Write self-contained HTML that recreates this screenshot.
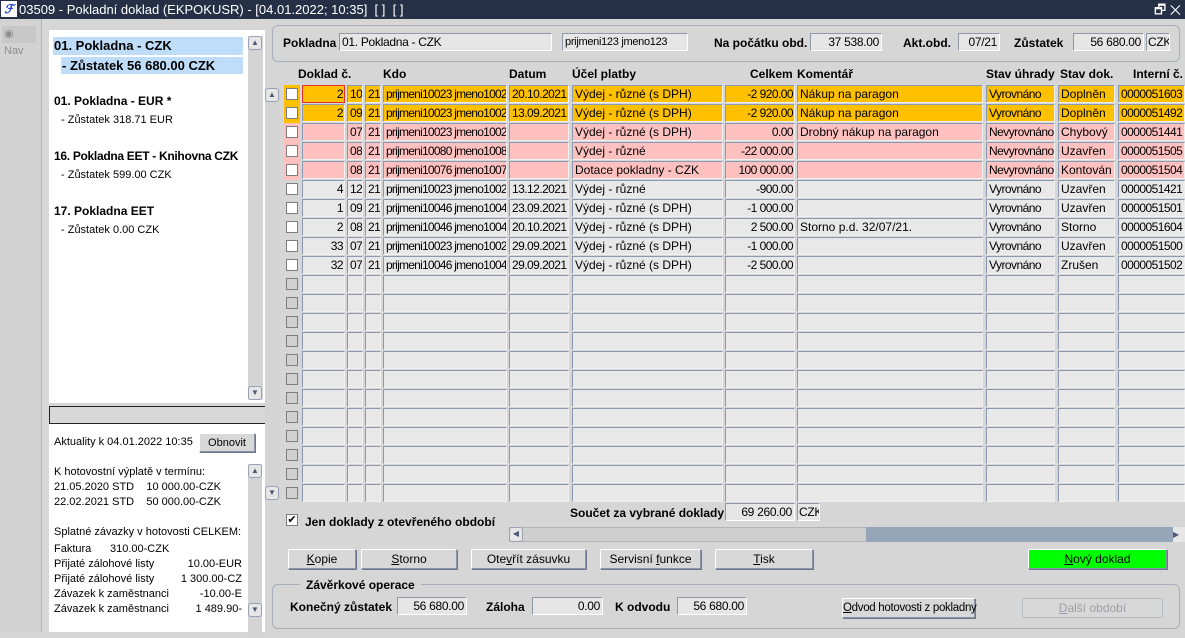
<!DOCTYPE html>
<html><head><meta charset="utf-8">
<style>
*{box-sizing:border-box;margin:0;padding:0}
body{width:1185px;height:632px;overflow:hidden;background:#d6d6d6;font-family:"Liberation Sans",sans-serif;font-size:12px;color:#000;position:relative}
.a{position:absolute}
.title{left:0;top:0;width:1185px;height:19px;background:#253047;color:#fff;font-size:13px;line-height:19px;padding-left:19px}
.logo{left:1px;top:1px;width:16px;height:16px;background:#fff;color:#1a3cc8;font:bold italic 12px "Liberation Sans";line-height:16px;text-align:center}
.fld{position:absolute;height:18px;border:1px solid #8f98a6;border-right-color:#fff;border-bottom-color:#fff;background:#e6e6e6;line-height:16px;padding:0 2px;white-space:nowrap;overflow:hidden;font-size:12px;letter-spacing:-0.3px}
.r{text-align:right}
.b{font-weight:bold}
.cell{position:absolute;height:18px;border:1px solid #8a98b0;border-right-color:#f0f0f0;border-bottom-color:#f0f0f0;line-height:16px;padding:0 1px 0 2px;white-space:nowrap;overflow:hidden}
.n{letter-spacing:-0.55px}
.k{letter-spacing:-0.75px}
.cb{position:absolute;width:12px;height:12px;border:1px solid #7d7d7d;background:#fff}
.btn{position:absolute;height:20px;border:1px solid #8a94a4;border-top-color:#fff;border-left-color:#fff;background:#d8d8d8;text-align:center;line-height:18px;box-shadow:1px 1px 0 #6c7890;white-space:nowrap}
.grp{position:absolute;border:1px solid #a7afbc;border-radius:6px}
.sb{position:absolute;background:#d0d0d0}
.arr{position:absolute;width:14px;height:14px;border:1px solid #98a2b4;border-radius:3px;background:#e6e6e6;font-size:8px;line-height:12px;text-align:center;color:#4c5a74}
</style></head><body>
<div class="a title">03509 - Pokladní doklad (EKPOKUSR) - [04.01.2022; 10:35]&nbsp; [ ]&nbsp; [ ]</div>
<div class="a logo">ℱ</div>
<div class="a" style="right:4px;top:1px;color:#fff;font-size:13px;line-height:17px">🗗 ✕</div>

<div class="a" style="left:0;top:19px;width:42px;height:613px;background:#d3d3d3;border-right:1px solid #b4b4b4"></div>
<div class="a" style="left:2px;top:26px;width:34px;height:17px;background:#c8c8c8;color:#8c8c8c;font-size:11px;line-height:17px;padding-left:2px">◉ Nav</div>
<div class="a" style="left:43px;top:19px;width:6px;height:613px;background:#d8d8d8"></div>

<div class="a" style="left:49px;top:30px;width:216px;height:373px;background:#fff"></div>
<div class="a" style="left:53px;top:37px;width:190px;height:18px;background:#bfdcf8;font-size:13px;font-weight:bold;line-height:18px;padding-left:1px">01. Pokladna - CZK</div>
<div class="a" style="left:61px;top:57px;width:182px;height:17px;background:#bfdcf8;font-size:13px;font-weight:bold;line-height:17px;padding-left:1px">- Zůstatek 56 680.00 CZK</div>
<div class="a b" style="left:54px;top:94px;font-size:12px">01. Pokladna - EUR *</div>
<div class="a" style="left:61px;top:114px;font-size:11px">- Zůstatek 318.71 EUR</div>
<div class="a b" style="left:54px;top:149px;font-size:12px;letter-spacing:-0.3px">16. Pokladna EET - Knihovna CZK</div>
<div class="a" style="left:61px;top:169px;font-size:11px">- Zůstatek 599.00 CZK</div>
<div class="a b" style="left:54px;top:204px;font-size:12px">17. Pokladna EET</div>
<div class="a" style="left:61px;top:224px;font-size:11px">- Zůstatek 0.00 CZK</div>
<div class="sb" style="left:248px;top:36px;width:15px;height:364px;background:#d4d4d4"></div>
<div class="arr" style="left:248px;top:36px">▲</div>
<div class="arr" style="left:248px;top:386px">▼</div>
<div class="a" style="left:49px;top:406px;width:216px;height:18px;background:#d8d8d8;border:1px solid #222;border-right:none"></div>
<div class="a" style="left:49px;top:424px;width:216px;height:208px;background:#fff"></div>
<div class="a" style="left:54px;top:436px;font-size:11px">Aktuality k 04.01.2022 10:35</div>
<div class="btn" style="left:199px;top:433px;width:56px;height:19px;font-size:11px">Obnovit</div>
<div class="a" style="left:54px;top:465px;font-size:11px;line-height:15px;white-space:pre">K hotovostní výplatě v termínu:
21.05.2020 STD    10 000.00-CZK
22.02.2021 STD    50 000.00-CZK

Splatné závazky v hotovosti CELKEM:</div>
<div class="a" style="left:54px;top:542px;font-size:11px;line-height:15px">Faktura<br>Přijaté zálohové listy<br>Přijaté zálohové listy<br>Závazek k zaměstnanci<br>Závazek k zaměstnanci</div>
<div class="a" style="left:54px;top:542px;width:188px;font-size:11px;line-height:15px;text-align:right;overflow:hidden;white-space:nowrap"><span style="position:absolute;left:56px">310.00-CZK</span><br>10.00-EUR<br>1 300.00-CZ<br>-10.00-E<br>1 489.90-</div>
<div class="sb" style="left:248px;top:464px;width:14px;height:174px;background:#d4d4d4"></div>
<div class="arr" style="left:248px;top:464px">▲</div>
<div class="arr" style="left:248px;top:603px">▼</div>

<div class="grp" style="left:272px;top:25px;width:908px;height:37px"></div>
<div class="a b" style="left:283px;top:36px">Pokladna</div>
<div class="fld" style="left:339px;top:33px;width:213px">01. Pokladna - CZK</div>
<div class="fld" style="left:562px;top:33px;width:126px;font-size:11px">prijmeni123 jmeno123</div>
<div class="a b" style="left:714px;top:36px">Na počátku obd.</div>
<div class="fld r" style="left:810px;top:33px;width:72px">37 538.00</div>
<div class="a b" style="left:903px;top:36px">Akt.obd.</div>
<div class="fld r" style="left:958px;top:33px;width:42px">07/21</div>
<div class="a b" style="left:1014px;top:36px">Zůstatek</div>
<div class="fld r" style="left:1073px;top:33px;width:71px">56 680.00</div>
<div class="fld" style="left:1146px;top:33px;width:24px;padding:0 1px">CZK</div>

<div class="a b" style="left:298px;top:67px">Doklad č.</div>
<div class="a b" style="left:383px;top:67px">Kdo</div>
<div class="a b" style="left:509px;top:67px">Datum</div>
<div class="a b" style="left:572px;top:67px">Účel platby</div>
<div class="a b" style="left:750px;top:67px">Celkem</div>
<div class="a b" style="left:797px;top:67px">Komentář</div>
<div class="a b" style="left:986px;top:67px">Stav úhrady</div>
<div class="a b" style="left:1060px;top:67px">Stav dok.</div>
<div class="a b" style="left:1133px;top:67px">Interní č.</div>

<div class="sb" style="left:265px;top:88px;width:15px;height:412px;background:#d4d4d4"></div>
<div class="arr" style="left:265px;top:88px">▲</div>
<div class="arr" style="left:265px;top:486px">▼</div>

<div id="rows"></div>

<div class="cb" style="left:286px;top:514px;background:#fff;font-size:11px;line-height:10px;text-align:center">✔</div>
<div class="a b" style="left:305px;top:515px">Jen doklady z otevřeného období</div>
<div class="a b" style="left:570px;top:506px">Součet za vybrané doklady</div>
<div class="fld r" style="left:725px;top:503px;width:70px">69 260.00</div>
<div class="fld" style="left:797px;top:503px;width:23px;padding:0 1px">CZK</div>
<div class="a" style="left:509px;top:527px;width:676px;height:15px;background:#cfcfcf;border:1px solid #b4b4b4"></div>
<div class="a" style="left:866px;top:527px;width:319px;height:15px;background:#97a5b8"></div>
<div class="arr" style="left:509px;top:527px;height:15px">◀</div>
<div class="a" style="left:1173px;top:527px;width:12px;height:15px;background:#e6e6e6;font-size:8px;line-height:15px;color:#4c5a74">▶</div>

<div class="btn" style="left:288px;top:549px;width:68px"><u>K</u>opie</div>
<div class="btn" style="left:361px;top:549px;width:96px"><u>S</u>torno</div>
<div class="btn" style="left:471px;top:549px;width:115px">Ote<u>v</u>řít zásuvku</div>
<div class="btn" style="left:600px;top:549px;width:101px">Servisní <u>f</u>unkce</div>
<div class="btn" style="left:715px;top:549px;width:98px"><u>T</u>isk</div>
<div class="btn" style="left:1028px;top:549px;width:139px;background:#00ff00"><u>N</u>ový doklad</div>

<div class="grp" style="left:272px;top:584px;width:908px;height:45px"></div>
<div class="a b" style="left:300px;top:578px;background:#d6d6d6;padding:0 6px">Závěrkové operace</div>
<div class="a b" style="left:290px;top:600px">Konečný zůstatek</div>
<div class="fld r" style="left:397px;top:597px;width:70px">56 680.00</div>
<div class="a b" style="left:486px;top:600px">Záloha</div>
<div class="fld r" style="left:532px;top:597px;width:71px">0.00</div>
<div class="a b" style="left:615px;top:600px">K odvodu</div>
<div class="fld r" style="left:677px;top:597px;width:70px">56 680.00</div>
<div class="btn" style="left:842px;top:598px;width:133px;font-size:11.5px;letter-spacing:-0.3px"><u>O</u>dvod hotovosti z pokladny</div>
<div class="btn" style="left:1022px;top:598px;width:141px;color:#9aa0aa;box-shadow:none;border-color:#b8bcc4"><u>D</u>alší období</div>

<script>
var cols=[[302,43,'r n'],[347,16,'n'],[365,16,'n'],[383,124,'k'],[509,60,'n'],[572,151,''],[725,70,'r n'],[797,186,''],[986,69,'n'],[1058,57,''],[1118,67,'n']];
var O='#ffc000',P='#ffc0c0',G='#e8e8e8';
var d=[
[O,'2','10','21','prijmeni10023 jmeno1002','20.10.2021','Výdej - různé (s DPH)','-2 920.00','Nákup na paragon','Vyrovnáno','Doplněn','0000051603'],
[O,'2','09','21','prijmeni10023 jmeno1002','13.09.2021','Výdej - různé (s DPH)','-2 920.00','Nákup na paragon','Vyrovnáno','Doplněn','0000051492'],
[P,'','07','21','prijmeni10023 jmeno1002','','Výdej - různé (s DPH)','0.00','Drobný nákup na paragon','Nevyrovnáno','Chybový','0000051441'],
[P,'','08','21','prijmeni10080 jmeno1008','','Výdej - různé','-22 000.00','','Nevyrovnáno','Uzavřen','0000051505'],
[P,'','08','21','prijmeni10076 jmeno1007','','Dotace pokladny - CZK','100 000.00','','Nevyrovnáno','Kontován','0000051504'],
[G,'4','12','21','prijmeni10023 jmeno1002','13.12.2021','Výdej - různé','-900.00','','Vyrovnáno','Uzavřen','0000051421'],
[G,'1','09','21','prijmeni10046 jmeno1004','23.09.2021','Výdej - různé (s DPH)','-1 000.00','','Vyrovnáno','Uzavřen','0000051501'],
[G,'2','08','21','prijmeni10046 jmeno1004','20.10.2021','Výdej - různé (s DPH)','2 500.00','Storno p.d. 32/07/21.','Vyrovnáno','Storno','0000051604'],
[G,'33','07','21','prijmeni10023 jmeno1002','29.09.2021','Výdej - různé (s DPH)','-1 000.00','','Vyrovnáno','Uzavřen','0000051500'],
[G,'32','07','21','prijmeni10046 jmeno1004','29.09.2021','Výdej - různé (s DPH)','-2 500.00','','Vyrovnáno','Zrušen','0000051502']];
var h='';
for(var i=0;i<22;i++){
 var y=85+i*19,row=d[i]||[G,'','','','','','','','','','',''];
 if(row[0]!=G)h+='<div class="a" style="left:284px;top:'+(y)+'px;width:16px;height:19px;background:'+row[0]+'"></div>';
 h+='<div class="cb" style="left:286px;top:'+(y+3)+'px;'+(d[i]?'':'background:#d0d0d0')+'"></div>';
 for(var c=0;c<cols.length;c++){var k=cols[c];
  var ex=(i==0&&c==0)?'border:1px solid #e03030;':'';
  h+='<div class="cell '+k[2]+'" style="left:'+k[0]+'px;top:'+y+'px;width:'+k[1]+'px;background:'+row[0]+';'+ex+'">'+row[c+1]+'</div>';}
}
document.getElementById('rows').innerHTML=h;
</script>
</body></html>
